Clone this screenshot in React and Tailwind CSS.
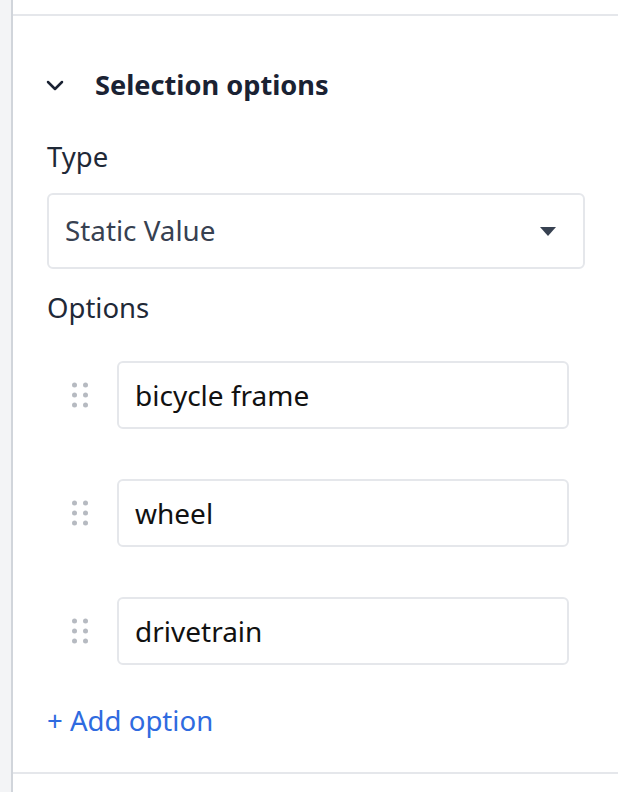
import React from 'react';

const options = ['bicycle frame', 'wheel', 'drivetrain'];

function DragHandle() {
  return (
    <svg width="16" height="26" viewBox="0 0 16 26" className="shrink-0">
      {[3, 13, 23].map(y => (
        <g key={y} fill="#b6bac1">
          <circle cx="2.5" cy={y} r="2.5" />
          <circle cx="13.5" cy={y} r="2.5" />
        </g>
      ))}
    </svg>
  );
}

export default function App() {
  return (
    <div
      className="flex w-[618px] h-[792px] bg-white overflow-hidden"
      style={{ fontFamily: '"Noto Sans", "Open Sans", sans-serif' }}
    >
      {/* Barra lateral */}
      <div className="w-[13px] shrink-0 bg-[#f3f4f6] border-r-2 border-[#d1d5db]" />

      <div className="flex-1 flex flex-col">
        <div className="h-[16px] shrink-0 border-b-2 border-[#e5e7eb]" />

        <div className="flex flex-col pl-[34px] pr-[33px] pt-[51px] pb-[34px] border-b-2 border-[#e5e7eb]">
          {/* Cabecera */}
          <div className="flex items-center h-[36px]">
            <svg width="18" height="11" viewBox="0 0 18 11" className="ml-[-1px]">
              <path d="M2 2 L9 9 L16 2" fill="none" stroke="#1a2233" strokeWidth="2.5" strokeLinecap="round" strokeLinejoin="round" />
            </svg>
            <span className="ml-[31px] text-[27.2px] leading-[36px] font-bold text-[#1a2233]">Selection options</span>
          </div>

          <label className="mt-[36px] text-[27.5px] leading-[36px] text-[#1f2937]">Type</label>
          <div className="mt-[18px] h-[76px] flex items-center justify-between border-2 border-[#e5e7eb] rounded-[6px] pl-[16px] pr-[27px]">
            <span className="text-[27.8px] text-[#374151]">Static Value</span>
            <svg width="16" height="9" viewBox="0 0 16 9">
              <path d="M0 0 H16 L8 9 Z" fill="#374151" />
            </svg>
          </div>

          <label className="mt-[21px] text-[27.5px] leading-[36px] text-[#1f2937]">Options</label>
          <div className="mt-[35px] flex flex-col gap-[50px]">
            {options.map(o => (
              <div key={o} className="flex items-center pl-[25px] pr-[16px]">
                <DragHandle />
                <div className="ml-[29px] flex-1 h-[68px] flex items-center border-2 border-[#e5e7eb] rounded-[6px] px-[16px]">
                  <span className="text-[28px] text-[#111111]">{o}</span>
                </div>
              </div>
            ))}
          </div>

          <button className="mt-[37px] self-start text-[27.6px] leading-[36px] text-[#2f6be0]">+ Add option</button>
        </div>
      </div>
    </div>
  );
}
